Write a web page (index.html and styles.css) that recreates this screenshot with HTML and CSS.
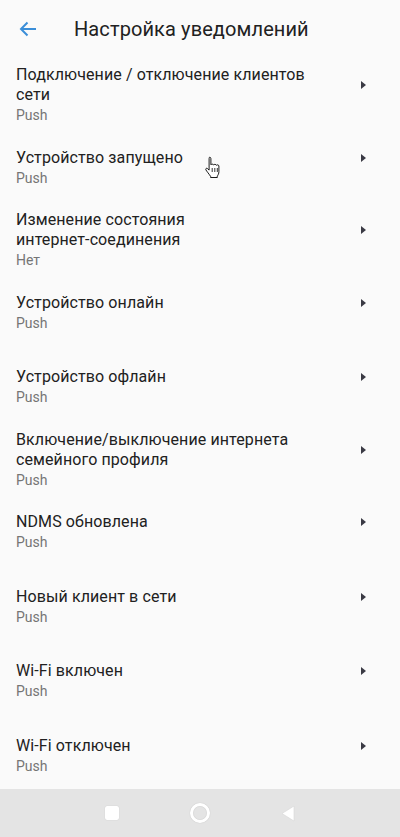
FILE: index.html
```html
<!DOCTYPE html>
<html lang="ru">
<head>
  <meta charset="UTF-8" />
  <meta name="viewport" content="width=device-width, initial-scale=1.0"/>
  <title>Настройка уведомлений</title>
  <link rel="stylesheet" href="styles.css">
</head>
<body>
  <div class="screen">
    <!-- toolbar -->
    <div class="toolbar">
      <button class="back">
        <svg width="18" height="16" viewBox="0 0 18 16">
          <path d="M17 8H2M8.5 1.5L2 8l6.5 6.5" fill="none" stroke="#3b8ed8" stroke-width="2"/>
        </svg>
      </button>
      <div class="toolbar-title">Настройка уведомлений</div>
    </div>

    <!-- settings list -->
    <div class="list">
      <div class="item">
        <div class="item-head"><div class="item-title">Подключение / отключение клиентов сети</div><span class="caret"></span></div>
        <div class="item-sub">Push</div>
      </div>
      <div class="item">
        <div class="item-head"><div class="item-title">Устройство запущено</div><span class="caret"></span></div>
        <div class="item-sub">Push</div>
      </div>
      <div class="item">
        <div class="item-head"><div class="item-title">Изменение состояния интернет&#8209;соединения</div><span class="caret"></span></div>
        <div class="item-sub">Нет</div>
      </div>
      <div class="item loose">
        <div class="item-head"><div class="item-title">Устройство онлайн</div><span class="caret"></span></div>
        <div class="item-sub">Push</div>
      </div>
      <div class="item">
        <div class="item-head"><div class="item-title">Устройство офлайн</div><span class="caret"></span></div>
        <div class="item-sub">Push</div>
      </div>
      <div class="item">
        <div class="item-head"><div class="item-title">Включение/выключение интернета семейного профиля</div><span class="caret"></span></div>
        <div class="item-sub">Push</div>
      </div>
      <div class="item loose">
        <div class="item-head"><div class="item-title">NDMS обновлена</div><span class="caret"></span></div>
        <div class="item-sub">Push</div>
      </div>
      <div class="item loose">
        <div class="item-head"><div class="item-title">Новый клиент в сети</div><span class="caret"></span></div>
        <div class="item-sub">Push</div>
      </div>
      <div class="item loose">
        <div class="item-head"><div class="item-title">Wi-Fi включен</div><span class="caret"></span></div>
        <div class="item-sub">Push</div>
      </div>
      <div class="item loose">
        <div class="item-head"><div class="item-title">Wi-Fi отключен</div><span class="caret"></span></div>
        <div class="item-sub">Push</div>
      </div>
    </div>

    <!-- system navigation -->
    <div class="navbar">
      <span class="nav-square"></span>
      <span class="nav-circle"></span>
      <svg class="nav-back" width="14" height="17" viewBox="0 0 14 17">
        <path d="M13 1v15L1 8.5z" fill="#fff" stroke="#d6d6d6" stroke-width="0.6" stroke-linejoin="round"/>
      </svg>
    </div>

    <!-- mouse pointer over the list -->
    <svg class="cursor" width="16" height="22" viewBox="0 0 16 22">
      <path d="M4.5 1.2c.9 0 1.4.6 1.4 1.4v6.2c.2-.9 2.6-.9 2.8.2.3-.9 2.5-.8 2.7.3.4-.8 2.4-.6 2.5.7v5.6c0 2.2-1 3.5-1.6 4.6v1.3H5.6v-1.1C4.3 18.4 1.6 15 .9 13.9c-.6-1 .5-2.2 1.5-1.4l1.7 1.6V2.6c0-.8.5-1.4.4-1.4z" fill="#fff" stroke="#000" stroke-width="0.9" stroke-linejoin="round"/>
      <path d="M7.2 12v4M9.8 12v4M12.3 12v4" stroke="#000" stroke-width="0.8"/>
    </svg>
  </div>
</body>
</html>
```

FILE: styles.css
```css
/* page */
body {
  margin: 0;
  background: #fafafa;
  font-family: Roboto, "Noto Sans", sans-serif;
  color: #212121;
}
.screen {
  position: relative;
  display: flex;
  flex-direction: column;
  width: 400px;
  height: 837px;
  overflow: hidden;
}

/* toolbar */
.toolbar {
  display: flex;
  align-items: center;
  height: 50px;
  padding-top: 4px;
  flex-shrink: 0;
}
.back {
  display: flex;
  align-items: center;
  justify-content: center;
  width: 24px;
  height: 24px;
  margin-left: 16px;
  padding: 0;
  border: none;
  background: none;
}
.toolbar-title {
  margin-left: 34px;
  font-size: 20px;
  letter-spacing: 0.1px;
}

/* list */
.list {
  flex: 1;
  overflow: hidden;
}
.item {
  padding: 11px 24px 10.5px 16px;
}
.item.loose {
  padding-bottom: 22.5px;
}
.item-head {
  display: flex;
  align-items: center;
}
.item-title {
  flex: 1;
  max-width: 316px;
  margin-right: auto;
  font-size: 16px;
  line-height: 20px;
  letter-spacing: 0.1px;
}
.caret {
  width: 0;
  height: 0;
  border-top: 4.5px solid transparent;
  border-bottom: 4.5px solid transparent;
  border-left: 5px solid #3a3a44;
  margin-right: 10px;
}
.item-sub {
  font-size: 14px;
  line-height: 21px;
  color: #757575;
}

/* system navigation bar */
.navbar {
  display: flex;
  align-items: center;
  justify-content: center;
  gap: 71px;
  height: 48px;
  flex-shrink: 0;
  background: #e4e4e4;
}
.nav-square {
  width: 14px;
  height: 14px;
  background: #fff;
  border-radius: 2px;
  box-shadow: 0 0 1px rgba(0, 0, 0, 0.2);
}
.nav-circle {
  width: 14px;
  height: 14px;
  border: 3px solid #fff;
  border-radius: 50%;
  box-shadow: 0 0 1px rgba(0, 0, 0, 0.25), inset 0 0 1px rgba(0, 0, 0, 0.25);
}

/* pointer overlay */
.cursor {
  position: absolute;
  left: 205px;
  top: 156px;
}
```
